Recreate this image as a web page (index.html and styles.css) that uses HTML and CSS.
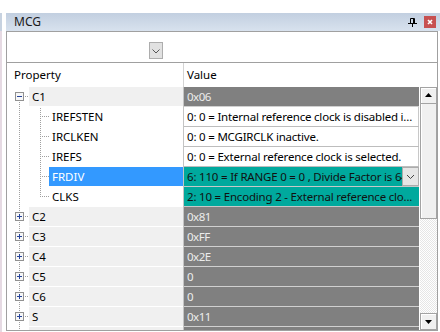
FILE: index.html
```html
<!DOCTYPE html>
<html>
<head>
<meta charset="utf-8">
<link rel="stylesheet" href="styles.css">
</head>
<body>
<div class="app">
  <div class="edge"></div>
  <div class="panel">
    <div class="titlebar">
      <span class="title">MCG</span>
      <svg class="pin" width="9" height="9" viewBox="0 0 9 9"><path d="M2.5 0.5h4v5M2.5 0.5v5M5.5 0.5v5M0 5.5h9M4.5 6v3" stroke="#000" fill="none"/></svg>
      <span class="close"><svg width="12" height="12" viewBox="0 0 12 12"><path d="M4 4l4 4M8 4l-4 4" stroke="#fff" stroke-width="1.6" fill="none"/></svg></span>
    </div>
    <div class="body">
      <div class="toolbar">
        <span class="combo-btn"><svg width="12" height="15" viewBox="0 0 12 15"><path d="M2.5 6.5l3.5 3.5 3.5-3.5" stroke="#555" fill="none"/></svg></span>
      </div>
      <div class="head">
        <div class="hprop">Property</div>
        <div class="hdiv"></div>
        <div class="hval">Value</div>
      </div>
      <div class="main">
        <div class="rows">
          <div class="row">
            <div class="prop">
              <svg class="gut" width="22" height="20" viewBox="0 0 22 20"><path class="dot" d="M12.5 15v5"/><path class="dot" d="M18 9.5h4"/><rect class="box" x="8.5" y="5.5" width="8" height="8"/><path class="sign" d="M10 9.5h5"/></svg>
              <div class="label grp">C1</div>
            </div>
            <div class="div"></div>
            <div class="val gray"><span class="txt">0x06</span></div>
          </div>
          <div class="row">
            <div class="prop">
              <svg class="gut" width="42" height="20" viewBox="0 0 42 20"><path class="dot" d="M12.5 1v19"/><path class="dot" d="M33.5 1v19"/><path class="dot" d="M35 9.5h7"/></svg>
              <div class="label">IREFSTEN</div>
            </div>
            <div class="div"></div>
            <div class="val white"><span class="txt">0: 0 = Internal reference clock is disabled i...</span></div>
          </div>
          <div class="row">
            <div class="prop">
              <svg class="gut" width="42" height="20" viewBox="0 0 42 20"><path class="dot" d="M12.5 1v19"/><path class="dot" d="M33.5 1v19"/><path class="dot" d="M35 9.5h7"/></svg>
              <div class="label">IRCLKEN</div>
            </div>
            <div class="div"></div>
            <div class="val white"><span class="txt">0: 0 = MCGIRCLK inactive.</span></div>
          </div>
          <div class="row">
            <div class="prop">
              <svg class="gut" width="42" height="20" viewBox="0 0 42 20"><path class="dot" d="M12.5 1v19"/><path class="dot" d="M33.5 1v19"/><path class="dot" d="M35 9.5h7"/></svg>
              <div class="label">IREFS</div>
            </div>
            <div class="div"></div>
            <div class="val white"><span class="txt">0: 0 = External reference clock is selected.</span></div>
          </div>
          <div class="row">
            <div class="prop">
              <svg class="gut" width="42" height="20" viewBox="0 0 42 20"><path class="dot" d="M12.5 1v19"/><path class="dot" d="M33.5 1v19"/><path class="dot" d="M35 9.5h7"/></svg>
              <div class="label sel">FRDIV</div>
            </div>
            <div class="div"></div>
            <div class="val teal"><span class="txt">6: 110 = If RANGE 0 = 0 , Divide Factor is 64</span><span class="vbtn"><svg width="15" height="17" viewBox="0 0 15 17"><path d="M4 7l3.5 3.5 3.5-3.5" stroke="#444" fill="none"/></svg></span></div>
          </div>
          <div class="row">
            <div class="prop">
              <svg class="gut" width="42" height="20" viewBox="0 0 42 20"><path class="dot" d="M12.5 1v19"/><path class="dot" d="M33.5 1v9"/><path class="dot" d="M35 9.5h7"/></svg>
              <div class="label">CLKS</div>
            </div>
            <div class="div"></div>
            <div class="val teal"><span class="txt">2: 10 = Encoding 2 - External reference clo...</span></div>
          </div>
          <div class="row">
            <div class="prop">
              <svg class="gut" width="22" height="20" viewBox="0 0 22 20"><path class="dot" d="M12.5 1v4"/><path class="dot" d="M12.5 15v5"/><path class="dot" d="M18 9.5h4"/><rect class="box" x="8.5" y="5.5" width="8" height="8"/><path class="sign" d="M10 9.5h5M12.5 7v5"/></svg>
              <div class="label grp">C2</div>
            </div>
            <div class="div"></div>
            <div class="val gray"><span class="txt">0x81</span></div>
          </div>
          <div class="row">
            <div class="prop">
              <svg class="gut" width="22" height="20" viewBox="0 0 22 20"><path class="dot" d="M12.5 1v4"/><path class="dot" d="M12.5 15v5"/><path class="dot" d="M18 9.5h4"/><rect class="box" x="8.5" y="5.5" width="8" height="8"/><path class="sign" d="M10 9.5h5M12.5 7v5"/></svg>
              <div class="label grp">C3</div>
            </div>
            <div class="div"></div>
            <div class="val gray"><span class="txt">0xFF</span></div>
          </div>
          <div class="row">
            <div class="prop">
              <svg class="gut" width="22" height="20" viewBox="0 0 22 20"><path class="dot" d="M12.5 1v4"/><path class="dot" d="M12.5 15v5"/><path class="dot" d="M18 9.5h4"/><rect class="box" x="8.5" y="5.5" width="8" height="8"/><path class="sign" d="M10 9.5h5M12.5 7v5"/></svg>
              <div class="label grp">C4</div>
            </div>
            <div class="div"></div>
            <div class="val gray"><span class="txt">0x2E</span></div>
          </div>
          <div class="row">
            <div class="prop">
              <svg class="gut" width="22" height="20" viewBox="0 0 22 20"><path class="dot" d="M12.5 1v4"/><path class="dot" d="M12.5 15v5"/><path class="dot" d="M18 9.5h4"/><rect class="box" x="8.5" y="5.5" width="8" height="8"/><path class="sign" d="M10 9.5h5M12.5 7v5"/></svg>
              <div class="label grp">C5</div>
            </div>
            <div class="div"></div>
            <div class="val gray"><span class="txt">0</span></div>
          </div>
          <div class="row">
            <div class="prop">
              <svg class="gut" width="22" height="20" viewBox="0 0 22 20"><path class="dot" d="M12.5 1v4"/><path class="dot" d="M12.5 15v5"/><path class="dot" d="M18 9.5h4"/><rect class="box" x="8.5" y="5.5" width="8" height="8"/><path class="sign" d="M10 9.5h5M12.5 7v5"/></svg>
              <div class="label grp">C6</div>
            </div>
            <div class="div"></div>
            <div class="val gray"><span class="txt">0</span></div>
          </div>
          <div class="row">
            <div class="prop">
              <svg class="gut" width="22" height="20" viewBox="0 0 22 20"><path class="dot" d="M12.5 1v4"/><path class="dot" d="M12.5 15v5"/><path class="dot" d="M18 9.5h4"/><rect class="box" x="8.5" y="5.5" width="8" height="8"/><path class="sign" d="M10 9.5h5M12.5 7v5"/></svg>
              <div class="label grp">S</div>
            </div>
            <div class="div"></div>
            <div class="val gray"><span class="txt">0x11</span></div>
          </div>
          <div class="row">
            <div class="prop">
              <svg class="gut" width="22" height="20" viewBox="0 0 22 20"><path class="dot" d="M12.5 1v4"/><path class="dot" d="M12.5 15v5"/><path class="dot" d="M18 9.5h4"/><rect class="box" x="8.5" y="5.5" width="8" height="8"/><path class="sign" d="M10 9.5h5M12.5 7v5"/></svg>
              <div class="label grp">SC</div>
            </div>
            <div class="div"></div>
            <div class="val gray"><span class="txt">0x00</span></div>
          </div>
        </div>
        <div class="sb">
          <span class="sbtn"><svg width="15" height="15" viewBox="0 0 15 15"><path d="M4 9h7l-3.5-4z" fill="#000"/></svg></span>
          <span class="thumb"></span>
          <span class="track"></span>
          <span class="sbtn"><svg width="15" height="15" viewBox="0 0 15 15"><path d="M4 6h7l-3.5 4z" fill="#000"/></svg></span>
        </div>
      </div>
    </div>
  </div>
</div>
</body>
</html>
```

FILE: styles.css
```css
* { box-sizing: border-box; margin: 0; padding: 0; }
html, body { width: 440px; height: 332px; overflow: hidden; background: #fff; }
body { font-family: "Noto Sans", "DejaVu Sans", sans-serif; font-size: 11.5px; color: #000; }

.app { display: flex; height: 332px; }
.edge { width: 2px; margin-top: 13px; background: linear-gradient(#c7d2e0 0 18px, #e6dae3 18px); }

.panel { margin-left: 4px; margin-top: 13px; width: 434px; display: flex; flex-direction: column; }

.titlebar { height: 18px; display: flex; align-items: center; padding: 0 4px; background: linear-gradient(#c2cfe0, #d8e2ee); }
.title { flex: 1; font-size: 12px; color: #1a1a1a; padding-left: 4px; line-height: 18px; }
.pin { display: block; margin-right: 7px; }
.close { width: 12px; height: 12px; background: #c75050; display: flex; }

.body { width: 432px; height: 300px; border: 1px solid #a0a0a0; display: flex; flex-direction: column; background: #fff; }

.toolbar { height: 31px; border-bottom: 1px solid #a0a0a0; padding: 10px 0 0 142px; }
.combo-btn { display: flex; width: 14px; height: 17px; border: 1px solid #adadad; background: #e1e1e1; }

.head { height: 24px; display: flex; }
.hprop { width: 176px; padding-left: 7px; line-height: 24px; }
.hdiv { width: 1px; background: #d4d4d4; }
.hval { flex: 1; padding-left: 3px; line-height: 24px; }

.main { height: 243px; display: flex; overflow: hidden; }
.rows { width: 412px; display: flex; flex-direction: column; }

.row { display: flex; height: 20px; flex-shrink: 0; }
.prop { width: 176px; display: flex; }
.gut { display: block; flex-shrink: 0; }
.dot { stroke: #a0a0a0; stroke-dasharray: 1 1; fill: none; shape-rendering: crispEdges; }
.box { fill: #f7f7f7; stroke: #919191; shape-rendering: crispEdges; }
.sign { stroke: #27449a; fill: none; shape-rendering: crispEdges; }
.label { flex: 1; height: 19px; line-height: 19px; padding-left: 3px; white-space: nowrap; }
.label.grp { background: #f0f0f0; }
.label.sel { background: #3399ff; color: #fff; }

.div { width: 1px; background: #c4c4c4; }
.val { width: 235px; height: 20px; display: flex; border-bottom: 1px solid #d0d0d0; }
.txt { flex: 1; padding-left: 3px; line-height: 19px; white-space: nowrap; overflow: hidden; letter-spacing: -0.2px; }
.val.gray { background: #808080; color: #ececec; }
.val.gray .txt { letter-spacing: -0.5px; }
.val.white { background: #fff; border-bottom-color: #bdbdbd; box-shadow: inset -1px 0 #c8c8c8; }
.val.teal { background: #00a99d; color: #111; border-bottom-color: #c8c8c8; }
.vbtn { display: flex; width: 17px; height: 19px; border: 1px solid #acacac; background: #e6e6e6; flex-shrink: 0; }

.sb { width: 18px; padding-left: 1px; display: flex; flex-direction: column; background: #fff; }
.sbtn { display: flex; height: 17px; flex-shrink: 0; border: 1px solid #a3a3a3; background: #f0f0f0; box-shadow: inset 1px 1px #fff; }
.thumb { height: 115px; flex-shrink: 0; border: 1px solid #a3a3a3; border-top: 0; background: #f0f0f0; box-shadow: inset 1px 0 #fff; }
.track { flex: 1; background: repeating-conic-gradient(#e6e6e6 0 25%, #fff 0 50%) 0 0 / 2px 2px; }
```
